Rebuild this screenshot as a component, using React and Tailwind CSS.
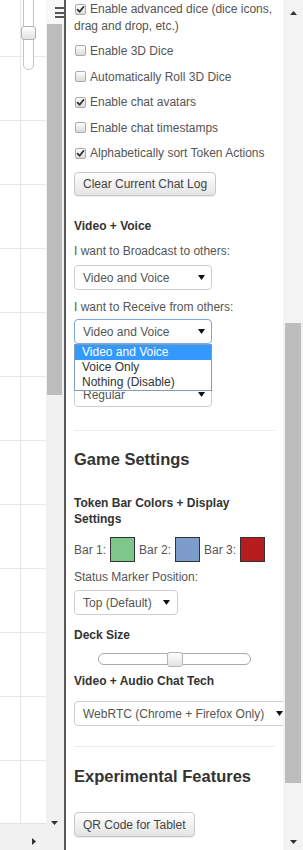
import React from "react";

const Check = ({ checked }) => (
  <span className="inline-flex items-center justify-center align-[-1px] w-[11px] h-[11px] ml-[1px] mr-[4px] rounded-[2px] border border-[#a9a9a9] bg-gradient-to-b from-white to-[#dadada]">
    {checked && (
      <svg width="9" height="9" viewBox="0 0 9 9">
        <path d="M1.6 4.6 L3.6 6.8 L7.6 1.8" fill="none" stroke="#2a2a2a" strokeWidth="1.7" strokeLinecap="round" strokeLinejoin="round" />
      </svg>
    )}
  </span>
);

const Arrow = () => (
  <svg width="7" height="5" viewBox="0 0 7 5" className="shrink-0">
    <path d="M0 0 L7 0 L3.5 5 Z" fill="#111" />
  </svg>
);

const Select = ({ text, className = "", focused = false, children }) => (
  <div
    className={
      "relative h-[25px] flex items-center justify-between pl-[8px] pr-[6px] bg-white rounded-[4px] border text-[12px] text-[#555] " +
      (focused ? "border-[#7ea6de]" : "border-[#cfcfcf]") +
      " " +
      className
    }
  >
    <span className="whitespace-nowrap">{text}</span>
    <Arrow />
    {children}
  </div>
);

const Row = ({ checked, children }) => (
  <div className="leading-[17px] mb-[8.5px]">
    <Check checked={checked} />
    {children}
  </div>
);

const Btn = ({ children, className = "" }) => (
  <div
    className={
      "inline-flex items-center px-[8px] rounded-[4px] border border-[#c8c8c8] bg-gradient-to-b from-white to-[#e4e4e4] text-[12px] text-[#444] shadow-[0_1px_1px_rgba(0,0,0,0.08)] " +
      className
    }
  >
    {children}
  </div>
);

const Swatch = ({ color }) => (
  <span className={"inline-block w-[25px] h-[25px] border border-[#333] " + color} />
);

export default function App() {
  return (
    <div
      className="w-[303px] h-[850px] overflow-hidden flex bg-white"
      style={{ fontFamily: '"Liberation Sans", Arial, sans-serif' }}
    >
      {/* canvas */}
      <div className="w-[46px] flex flex-col">
        <div className="relative flex-1 bg-white bg-[image:linear-gradient(to_right,#e6e6e6_1px,transparent_1px),linear-gradient(to_bottom,#e6e6e6_1px,transparent_1px)] bg-[size:64px_64px] bg-[position:20px_56px]">
          {/* zoom slider */}
          <div className="absolute left-[23px] top-[-10px] w-[11px] h-[80px] rounded-b-[5px] border border-[#c4c4c4] bg-white" />
          <div className="absolute left-[21px] top-[26px] w-[15px] h-[14px] rounded-[3px] border border-[#b3b3b3] bg-gradient-to-b from-white to-[#e2e2e2]" />
        </div>
        <div className="h-[27px] bg-[#f1f1f1] border-t border-[#e2e2e2] flex items-end justify-end pr-[10px] pb-[5px]">
          <svg width="4" height="7" viewBox="0 0 4 7">
            <path d="M0 0 L4 3.5 L0 7 Z" fill="#333" />
          </svg>
        </div>
      </div>

      {/* canvas vertical scrollbar */}
      <div className="w-[18px] flex flex-col bg-[#f1f1f1]">
        <div className="h-[24px] bg-[#f7f7f7] flex flex-col items-end justify-center gap-[2.5px] pt-[1px]">
          <span className="block w-[9px] h-[2px] bg-[#555]" />
          <span className="block w-[9px] h-[2px] bg-[#555]" />
          <span className="block w-[9px] h-[2px] bg-[#555]" />
        </div>
        <div className="h-[371px] ml-[1px] mr-[2px] bg-[#bcbcbc]" />
        <div className="flex-1" />
        <div className="h-[16px] flex items-center justify-center pr-[1px]">
          <svg width="7" height="4" viewBox="0 0 7 4">
            <path d="M0 0 L7 0 L3.5 4 Z" fill="#333" />
          </svg>
        </div>
        <div className="h-[19px]" />
      </div>

      {/* dialog border */}
      <div className="w-[2px] bg-[#5a5a5a]" />

      {/* settings panel */}
      <div className="w-[217px] overflow-hidden bg-white px-[8px] pt-[0.5px] text-[12px] text-[#555]">
        <Row checked>Enable advanced dice (dice icons, drag and drop, etc.)</Row>
        <Row>Enable 3D Dice</Row>
        <Row>Automatically Roll 3D Dice</Row>
        <Row checked>Enable chat avatars</Row>
        <Row>Enable chat timestamps</Row>
        <Row checked>Alphabetically sort Token Actions</Row>
        <Btn className="h-[24px] mt-[1.5px]">Clear Current Chat Log</Btn>

        <div className="mt-[21.5px] leading-[17px] font-bold text-[#333]">Video + Voice</div>
        <div className="mt-[8px] leading-[17px]">I want to Broadcast to others:</div>
        <Select text="Video and Voice" className="mt-[5.5px] w-[138px]" />
        <div className="mt-[8.5px] leading-[17px]">I want to Receive from others:</div>
        <Select text="Video and Voice" focused className="mt-[3.5px] w-[138px] z-10">
          <div className="absolute left-[-1px] top-[24px] w-[138px] bg-white border border-[#7f9db9] text-[12px] text-[#333]">
            <div className="h-[15px] leading-[15px] pl-[7px] bg-[#3399ff] text-white">Video and Voice</div>
            <div className="h-[15px] leading-[15px] pl-[7px]">Voice Only</div>
            <div className="h-[15px] leading-[15px] pl-[7px]">Nothing (Disable)</div>
          </div>
        </Select>
        <Select text="Regular" className="mt-[38px] w-[138px]" />

        <div className="mt-[23px] h-[1px] bg-[#ececec]" />

        <div className="mt-[18px] leading-[20px] text-[16.5px] font-bold text-[#333]">Game Settings</div>
        <div className="mt-[26px] leading-[16px] font-bold text-[#333]">Token Bar Colors + Display Settings</div>
        <div className="mt-[10px] h-[25px] flex items-center gap-[4px]">
          <span>Bar 1:</span>
          <Swatch color="bg-[#7dc78b]" />
          <span>Bar 2:</span>
          <Swatch color="bg-[#7c9dcb]" />
          <span>Bar 3:</span>
          <Swatch color="bg-[#b71c1e]" />
        </div>
        <div className="mt-[6.5px] leading-[17px]">Status Marker Position:</div>
        <Select text="Top (Default)" className="mt-[4.5px] w-[104px] pr-[7px]" />

        <div className="mt-[11.5px] leading-[17px] font-bold text-[#333]">Deck Size</div>
        <div className="mt-[8.5px] h-[15px] flex justify-center">
          <div className="relative w-[153px] h-[12px] mt-[1px] rounded-full border border-[#a9a9a9] bg-white">
            <div className="absolute left-[68px] top-[-2px] w-[16px] h-[15px] rounded-[3px] border border-[#b5b5b5] bg-gradient-to-b from-white to-[#e3e3e3]" />
          </div>
        </div>
        <div className="mt-[5.5px] leading-[17px] font-bold text-[#333]">Video + Audio Chat Tech</div>
        <Select text="WebRTC (Chrome + Firefox Only)" className="mt-[11.5px] w-[216px] pr-[2px]" />

        <div className="mt-[20px] h-[1px] bg-[#ececec]" />

        <div className="mt-[19px] leading-[20px] text-[16.5px] font-bold text-[#333]">Experimental Features</div>
        <Btn className="h-[25px] mt-[26px]">QR Code for Tablet</Btn>
      </div>

      {/* panel scrollbar */}
      <div className="w-[20px] flex flex-col bg-[#f3f3f3]">
        <div className="h-[323px] flex justify-center pt-[11px]">
          <svg width="7" height="4" viewBox="0 0 7 4">
            <path d="M0 4 L7 4 L3.5 0 Z" fill="#333" />
          </svg>
        </div>
        <div className="h-[460px] ml-[2px] mr-[2px] bg-[#bdbdbd]" />
        <div className="flex-1 flex flex-col justify-end items-center pb-[6px]">
          <svg width="7" height="4" viewBox="0 0 7 4">
            <path d="M0 0 L7 0 L3.5 4 Z" fill="#333" />
          </svg>
        </div>
      </div>
    </div>
  );
}
